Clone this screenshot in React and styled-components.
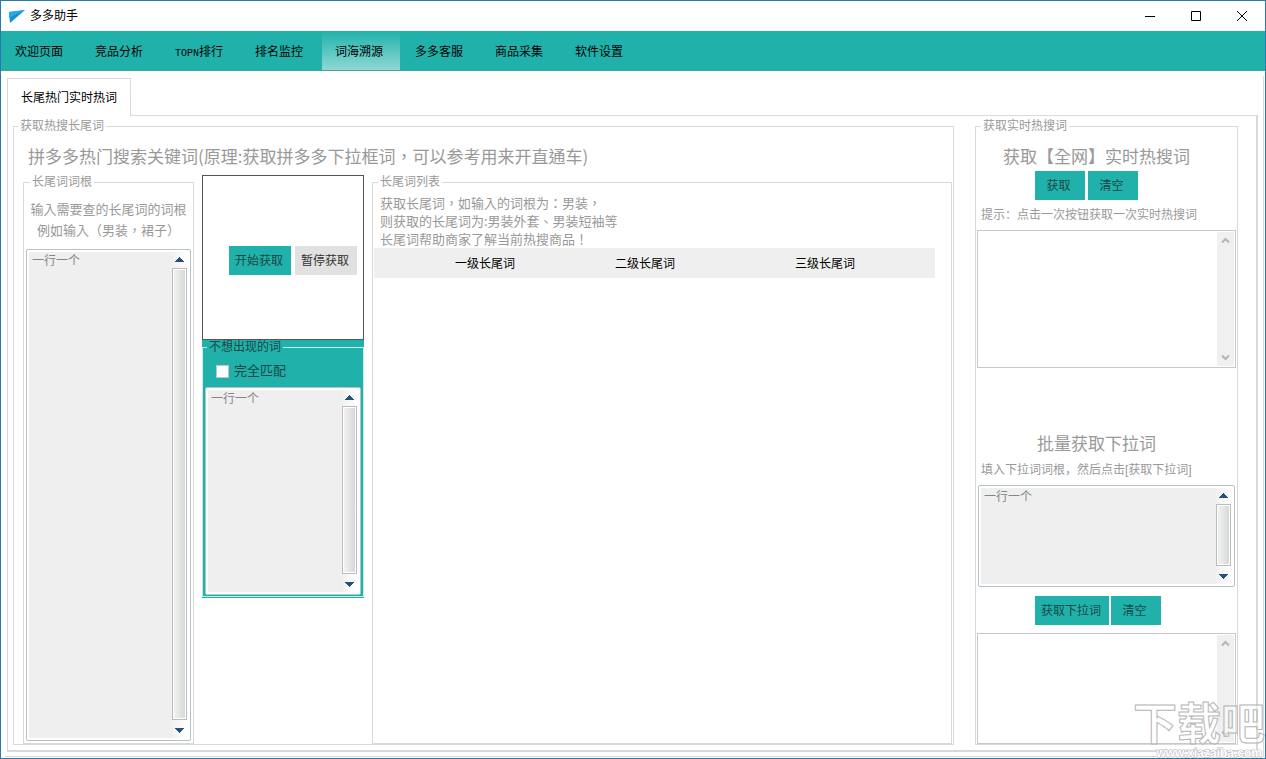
import React, { useState } from "react";
import styled, { createGlobalStyle, css } from "styled-components";

const MENUS = ["欢迎页面", "竞品分析", "TOPN排行", "排名监控", "词海溯源", "多多客服", "商品采集", "软件设置"];
const COLUMNS = ["一级长尾词", "二级长尾词", "三级长尾词"];

function Scroll() {
  return (
    <ScrollBar aria-hidden="true">
      <Arrow viewBox="0 0 9 5"><path d="M4 0h1v1h1v1h1v1h1v1h1v1H0V4h1V3h1V2h1V1h1z" /></Arrow>
      <Thumb />
      <DownArrow viewBox="0 0 9 5"><path d="M0 0h9v1H8v1H7v1H6v1H5v1H4V4H3V3H2V2H1V1H0z" /></DownArrow>
    </ScrollBar>
  );
}

function WordInput({ labelledBy, height }) {
  const [value, setValue] = useState("一行一个");
  return (
    <InputBox $height={height}>
      <WordArea aria-labelledby={labelledBy} value={value} onChange={(e) => { setValue(e.target.value) }} />
      <Scroll />
    </InputBox>
  );
}

function ResultBox({ labelledBy, height }) {
  return (
    <PlainBox $height={height}>
      <PlainArea aria-labelledby={labelledBy} />
      <PlainScroll aria-hidden="true">
        <Chevron viewBox="0 0 9 7"><path d="M1 5.5l3.5-3.5 3.5 3.5" /></Chevron>
        <Chevron viewBox="0 0 9 7"><path d="M1 1.5l3.5 3.5 3.5-3.5" /></Chevron>
      </PlainScroll>
    </PlainBox>
  );
}

function MenuText({ text }) {
  if (!text.startsWith("TOPN")) return text;
  return <><Latin>TOPN</Latin>{text.slice(4)}</>;
}

function App() {
  const [active, setActive] = useState("词海溯源");
  const [exact, setExact] = useState(false);
  return (
    <Window>
      <GlobalStyle />
      <TitleBar>
        <Logo viewBox="0 0 16 13">
          <path d="M0 2L16 0 1 13z" fill="#1591d6" />
          <path d="M0 2L16 0 5 5 0 8z" fill="#27a9ea" />
        </Logo>
        <AppName>多多助手</AppName>
        <WindowButton aria-label="最小化"><svg viewBox="0 0 11 11"><path d="M0 5.5h10" /></svg></WindowButton>
        <WindowButton aria-label="最大化"><svg viewBox="0 0 11 11"><path d="M.5 .5h9v9H.5z" /></svg></WindowButton>
        <WindowButton aria-label="关闭"><svg viewBox="0 0 11 11"><path d="M0 0l10 10M10 0L0 10" /></svg></WindowButton>
      </TitleBar>
      <Menu>
        {MENUS.map((menu) => (
          <MenuItem key={menu} $active={menu === active} onClick={() => { setActive(menu) }}>
            <MenuText text={menu} />
          </MenuItem>
        ))}
      </Menu>
      <Frame>
        <Tab role="tab" aria-selected="true">长尾热门实时热词</Tab>
        <Page>
          <SearchGroup>
            <Legend>获取热搜长尾词</Legend>
            <PageHeading>拼多多热门搜索关键词(原理:获取拼多多下拉框词，可以参考用来开直通车)</PageHeading>
            <Columns>
              <RootGroup>
                <Legend id="root-label">长尾词词根</Legend>
                <RootNote>输入需要查的长尾词的词根<br />例如输入（男装，裙子）</RootNote>
                <WordInput labelledBy="root-label" />
              </RootGroup>
              <ActionColumn>
                <ActionPanel>
                  <Button>开始获取</Button>
                  <Button $muted>暂停获取</Button>
                </ActionPanel>
                <ExcludePanel>
                  <ExcludeGroup>
                    <ExcludeLegend id="exclude-label">不想出现的词</ExcludeLegend>
                    <CheckLabel>
                      <Check type="checkbox" checked={exact} onChange={() => { setExact(!exact) }} />
                      完全匹配
                    </CheckLabel>
                    <WordInput labelledBy="exclude-label" height={208} />
                  </ExcludeGroup>
                </ExcludePanel>
              </ActionColumn>
              <ListGroup>
                <Legend>长尾词列表</Legend>
                <ListNote>
                  获取长尾词，如输入的词根为：男装，<br />
                  则获取的长尾词为:男装外套、男装短袖等<br />
                  长尾词帮助商家了解当前热搜商品！
                </ListNote>
                <Table>
                  <colgroup>
                    <Col $width={31} />
                    <Col $width={160} />
                    <Col $width={160} />
                    <Col $width={200} />
                    <Col />
                  </colgroup>
                  <thead>
                    <tr>
                      <td />
                      {COLUMNS.map((name) => <th key={name} scope="col">{name}</th>)}
                      <td />
                    </tr>
                  </thead>
                </Table>
              </ListGroup>
            </Columns>
          </SearchGroup>
          <LiveGroup>
            <Legend>获取实时热搜词</Legend>
            <SideHeading id="live-label">获取【全网】实时热搜词</SideHeading>
            <ButtonRow>
              <Button $wide>获取</Button>
              <Button $wide>清空</Button>
            </ButtonRow>
            <Tip>提示：点击一次按钮获取一次实时热搜词</Tip>
            <ResultBox labelledBy="live-label" height={138} />
            <BatchHeading id="batch-label">批量获取下拉词</BatchHeading>
            <Tip id="batch-tip">填入下拉词词根，然后点击[获取下拉词]</Tip>
            <BatchInput><WordInput labelledBy="batch-tip" height={102} /></BatchInput>
            <BatchButtons>
              <Button>获取下拉词</Button>
              <Button $wide>清空</Button>
            </BatchButtons>
            <ResultBox labelledBy="batch-label" />
          </LiveGroup>
        </Page>
      </Frame>
      <Watermark>
        <WatermarkName>下载吧</WatermarkName>
        <WatermarkUrl>www.xiazaiba.com</WatermarkUrl>
      </Watermark>
    </Window>
  );
}

const teal = "#20b2aa";
const line = "#d9d9d9";
const sans = `"Liberation Sans", "Noto Sans CJK SC", sans-serif`;
// full-width punctuation sits in the middle of its cell in this family
const noteFont = `"Noto Sans CJK TC", "Noto Sans CJK SC", sans-serif`;

const GlobalStyle = createGlobalStyle`
  * { box-sizing: border-box; }
  body { margin: 0; font: 12px/14px ${sans}; color: #000; background: #fff; }
  button, textarea, input { font: inherit; color: inherit; }
`;
const Window = styled.div`
  position: relative;
  display: flex;
  flex-direction: column;
  min-height: 100vh;
  border: 1px solid #2a7ab0;
  overflow: hidden;
`;
const TitleBar = styled.header`
  display: flex;
  align-items: center;
  height: 30px;
  padding-left: 8px;
`;
const Logo = styled.svg`
  width: 16px;
  height: 13px;
`;
const AppName = styled.h1`
  flex: 1;
  margin: 0 0 0 5px;
  font-size: 12px;
  font-weight: 400;
`;
const WindowButton = styled.button`
  display: flex;
  align-items: center;
  justify-content: center;
  width: 46px;
  height: 30px;
  padding: 0;
  border: 0;
  background: none;
  svg {
    width: 11px;
    height: 11px;
    fill: none;
    stroke: #000;
  }
`;
const Menu = styled.nav`
  display: flex;
  gap: 2px;
  height: 40px;
  padding-left: 1px;
  background: ${teal};
  border-bottom: 1px solid #4f9f99;
`;
const MenuItem = styled.button`
  width: 78px;
  padding: 2px 17px 0 13px;
  border: 0;
  white-space: nowrap;
  background: ${(p) => (p.$active ? `linear-gradient(${teal}, #8fd8d3)` : "none")};
`;
const Latin = styled.span`
  font-family: "Liberation Mono", monospace;
  font-size: 10px;
  line-height: 0;
`;
const Frame = styled.main`
  flex: 1;
  display: flex;
  flex-direction: column;
  align-items: flex-start;
  margin: 5px 1px 1px 4px;
  padding: 2px 5px 4px 2px;
  border: solid #d3dbe2;
  border-width: 0 1px 1px 0;
`;
const Tab = styled.button`
  z-index: 1;
  height: 38px;
  margin-bottom: -1px;
  padding: 0 13px;
  border: 1px solid ${line};
  border-bottom: 0;
  background: #fff;
`;
const Page = styled.div`
  flex: 1;
  align-self: stretch;
  display: flex;
  gap: 21px;
  padding: 3px 18px 5px 5px;
  border: 1px solid ${line};
  border-width: 1px 2px 2px 1px;
`;
const Group = styled.fieldset`
  display: flex;
  flex-direction: column;
  min-width: 0;
  margin: 0;
  padding: 0;
  border: 1px solid ${line};
`;
const Legend = styled.legend`
  margin-left: 4px;
  padding: 0 2px;
  line-height: 14px;
  color: #999;
`;
const SearchGroup = styled(Group)`
  flex: 1;
  padding: 12px 1px 0 9px;
  > ${Legend} { margin-left: -5px; }
`;
const Heading = styled.h2`
  margin: 0;
  font: 400 17px/22px ${noteFont};
  color: #999;
`;
const PageHeading = styled(Heading)`
  margin: 0 0 8px 5px;
`;
const Columns = styled.div`
  flex: 1;
  display: flex;
  gap: 8px;
`;
const RootGroup = styled(Group)`
  flex: none;
  width: 171px;
  padding: 9px 2px 2px;
`;
const Note = styled.p`
  margin: 0;
  font-family: ${noteFont};
  font-size: 13px;
  white-space: nowrap;
  color: #999;
`;
const RootNote = styled(Note)`
  margin-bottom: 9px;
  line-height: 21px;
  text-align: center;
`;
const InputBox = styled.div`
  display: flex;
  ${(p) => (p.$height ? css`height: ${p.$height}px;` : css`flex: 1;`)}
  padding: 2px 3px 2px 2px;
  border: 1px solid #b3c3cb;
  border-radius: 2px;
  background: #fff;
`;
const area = css`
  flex: 1;
  min-width: 0;
  margin: 0;
  border: 0;
  outline: 0;
  resize: none;
  overflow: hidden;
`;
const WordArea = styled.textarea`
  ${area}
  padding: 2px 3px;
  background: #efefef;
  color: #858585;
`;
const ScrollBar = styled.div`
  display: flex;
  flex-direction: column;
  align-items: center;
  width: 16px;
  background: linear-gradient(90deg, #f0f0f0, #fff);
`;
const Arrow = styled.svg`
  width: 9px;
  height: 5px;
  margin: 5px 0 6px;
  fill: #24527a;
  shape-rendering: crispEdges;
`;
const DownArrow = styled(Arrow)`
  margin: 8px 0 5px;
`;
const Thumb = styled.div`
  flex: 1;
  width: 15px;
  border: 1px solid #bcbcbc;
  box-shadow: inset 0 0 0 1px #fff;
  background: linear-gradient(90deg, #f4f4f4, #d4d6d6);
`;
const ActionColumn = styled.div`
  flex: none;
  width: 162px;
`;
const ActionPanel = styled.div`
  display: flex;
  justify-content: flex-end;
  align-items: flex-start;
  gap: 4px;
  height: 165px;
  padding: 70px 6px 0;
  border: 1px solid #555;
`;
const Button = styled.button`
  height: 29px;
  width: ${(p) => (p.$wide ? "50px" : "auto")};
  padding: 0 ${(p) => (p.$wide ? "3px 0 0" : "8px 0 6px")};
  border: 0;
  white-space: nowrap;
  background: ${(p) => (p.$muted ? "#e1e1e1" : teal)};
  color: ${(p) => (p.$muted ? "#333" : "#1c4744")};
`;
const ExcludePanel = styled.div`
  padding-bottom: 1px;
  background: ${teal};
`;
const ExcludeGroup = styled(Group)`
  padding: 6px 2px 1px;
  border-color: #c4ece9;
`;
const ExcludeLegend = styled(Legend)`
  margin-left: 2px;
  color: #1c4744;
`;
const CheckLabel = styled.label`
  display: flex;
  align-items: center;
  gap: 5px;
  height: 22px;
  margin: 0 0 5px 11px;
  font-size: 13px;
  color: #1c4744;
`;
const Check = styled.input`
  appearance: none;
  width: 13px;
  height: 13px;
  margin: 0;
  border: 1px solid #b9c4c3;
  background: #fff;
  &:checked { box-shadow: inset 0 0 0 3px #fff; background: #333; }
`;
const ListGroup = styled(Group)`
  flex: 1;
  padding: 5px 16px 0 1px;
`;
const ListNote = styled(Note)`
  margin-left: 6px;
  line-height: 18px;
`;
const Table = styled.table`
  width: 100%;
  table-layout: fixed;
  border-collapse: collapse;
  background: #efefef;
  th, td { height: 30px; padding: 2px 0 0; font-weight: 400; }
`;
const Col = styled.col`
  width: ${(p) => (p.$width ? `${p.$width}px` : "auto")};
`;
const LiveGroup = styled(Group)`
  flex: none;
  width: 263px;
  padding: 12px 1px 0;
`;
const SideHeading = styled(Heading)`
  margin-bottom: 4px;
  padding-right: 20px;
  text-align: center;
`;
const BatchHeading = styled(SideHeading)`
  margin: 64px 0 1px;
`;
const ButtonRow = styled.div`
  display: flex;
  gap: 3px;
  margin-left: 58px;
`;
const Tip = styled.p`
  margin: 6px 0 6px 4px;
  line-height: 18px;
  color: #999;
`;
const BatchInput = styled.div`
  padding: 0 1px;
`;
const BatchButtons = styled(ButtonRow)`
  gap: 2px;
  margin-top: 9px;
  margin-bottom: 8px;
`;
const PlainBox = styled.div`
  display: flex;
  ${(p) => (p.$height ? css`height: ${p.$height}px;` : css`flex: 1;`)}
  padding: 1px;
  border: 1px solid #c8c8c8;
`;
const PlainArea = styled.textarea`
  ${area}
  background: #fff;
`;
const PlainScroll = styled.div`
  display: flex;
  flex-direction: column;
  justify-content: space-between;
  align-items: center;
  width: 17px;
  padding: 5px 0;
  background: #f0f0f0;
`;
const Chevron = styled.svg`
  width: 9px;
  height: 7px;
  fill: none;
  stroke: #b4b4b4;
  stroke-width: 2;
`;
const Watermark = styled.div`
  position: absolute;
  z-index: 2;
  right: 0;
  bottom: 0;
  pointer-events: none;
  text-align: right;
`;
const WatermarkName = styled.div`
  font: 700 44px/54px "Noto Sans CJK SC", sans-serif;
  color: rgba(255, 255, 255, 0.5);
  -webkit-text-stroke: 1px #b5b5b5;
`;
const WatermarkUrl = styled.div`
  padding-right: 3px;
  font: 700 12px/10px "Liberation Sans", sans-serif;
  color: #fff;
  -webkit-text-stroke: 1px #b5b5b5;
  paint-order: stroke fill;
`;

export default React.memo(App);
